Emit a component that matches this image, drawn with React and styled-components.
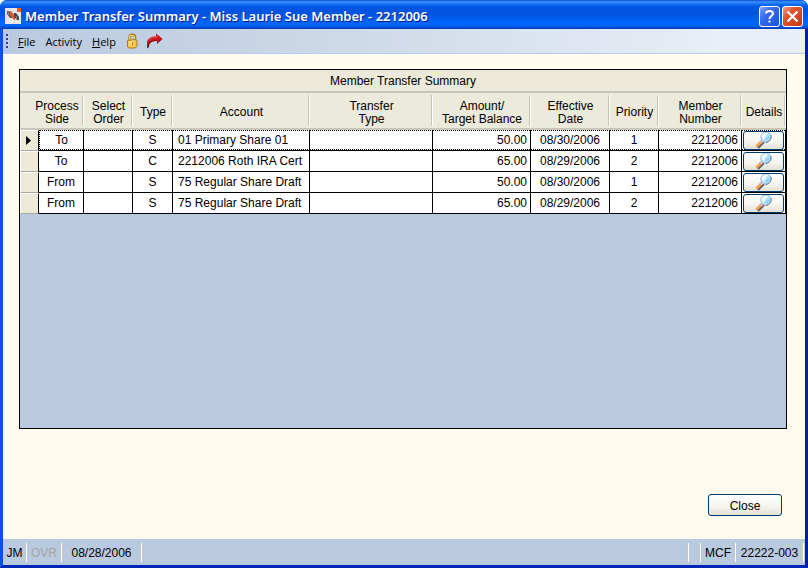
import React from "react";
import styled, { createGlobalStyle, css } from "styled-components";

const GlobalStyle = createGlobalStyle`
  * { box-sizing: border-box; }
  body { margin: 0; background: #fff; }
  button { font: inherit; color: inherit; margin: 0; padding: 0; cursor: default; }
`;

const Window = styled.div`
  min-height: 100vh;
  display: flex;
  flex-direction: column;
  border: 3px solid #0a3fd8;
  border-top: 0;
  border-left-color: #0a50e8;
  border-right-color: #001fa8;
  border-bottom-color: #0026b8;
  border-radius: 7px 7px 0 0;
  background: #fffbee;
  font-family: "Liberation Sans", Arial, sans-serif;
  font-size: 12px;
  line-height: 13px;
  color: #000;
`;

const TitleBar = styled.header`
  height: 29px;
  margin: 0 -3px;
  padding: 3px 5px 0 5px;
  display: flex;
  align-items: center;
  gap: 4px;
  border-radius: 7px 7px 0 0;
  background: linear-gradient(
    #0a4fd0 0, #3a93ff 2px, #1571f5 4px, #0256e2 7px, #0153e0 14px,
    #0261f8 20px, #0267ff 25px, #0148cc 28px, #0138b0 29px
  );
`;

const Title = styled.h1`
  margin: 0;
  flex: 1;
  font: 600 13px/16px "Noto Sans", "Open Sans", sans-serif;
  color: #fff;
  text-shadow: 1px 1px 0 #0a1d8c;
  white-space: nowrap;
`;

const CaptionButton = styled.button`
  width: 21px;
  height: 21px;
  margin-right: ${(p) => (p.$close ? 0 : -2)}px;
  display: flex;
  align-items: center;
  justify-content: center;
  border: 1px solid #fff;
  border-radius: 3px;
  background: ${(p) =>
    p.$close
      ? "linear-gradient(135deg, #f0a088, #e0532f 35%, #c63a12)"
      : "linear-gradient(135deg, #7fa5f8, #3a6cec 35%, #1f50d8)"};
`;

const MenuBar = styled.nav`
  height: 25px;
  padding-left: 3px;
  display: flex;
  align-items: center;
  border-bottom: 1px solid #b9cdf0;
  background: linear-gradient(90deg, #b9c9df, #cfdae8 45%, #e9eef7 90%);
  font: 11px/14px "Open Sans", Tahoma, sans-serif;
`;

const Grip = styled.span`
  width: 3px;
  height: 14px;
  margin-right: 9px;
  background: repeating-linear-gradient(#27487c 0 2px, transparent 2px 4px);
  border-right: 1px solid #c6d4e7;
`;

const MenuItem = styled.button`
  border: 0;
  background: none;
  margin-right: 10px;
  padding-top: 1px;
`;

const ToolButton = styled.button`
  border: 0;
  background: none;
  display: flex;
  margin-right: 8px;
`;

const Content = styled.main`
  flex: 1;
  display: flex;
  flex-direction: column;
  padding: 15px 18px 23px 16px;
`;

const GridPanel = styled.section`
  flex: 1;
  border: 1px solid #000;
  background: #b9c9df;
`;

const Table = styled.table`
  width: 100%;
  table-layout: fixed;
  border-collapse: separate;
  border-spacing: 0;
`;

const Caption = styled.caption`
  height: 23px;
  padding-top: 5px;
  border-bottom: 2px solid #c9c6b7;
  background: #ece9d8;
  text-align: center;
`;

const HeadCell = styled.th`
  height: 37px;
  padding: 4px 0 0 ${(p) => (p.$wide ? 10 : 0)}px;
  font-weight: normal;
  vertical-align: middle;
  white-space: pre-line;
  border-bottom: 2px solid #cbc7b8;
  background:
    linear-gradient(#fff, #fff) right 2px / 1px 31px no-repeat,
    linear-gradient(#c7c5b2, #c7c5b2) right 1px top 2px / 1px 31px no-repeat,
    #ebeadb;
`;

const cellBase = css`
  height: 21px;
  border-right: 1px solid #000;
  border-bottom: 1px solid #000;
  white-space: nowrap;
`;

const dots = "repeating-linear-gradient(90deg, #000 0 1px, #fff 1px 2px)";

const Cell = styled.td`
  ${cellBase}
  padding: 0 ${(p) => (p.$align === "right" ? 3 : 0)}px 0 ${(p) => (p.$align === "left" ? 5 : 0)}px;
  text-align: ${(p) => p.$align || "center"};
  background: ${(p) =>
    p.$current
      ? `${dots} top / 100% 1px no-repeat, ${dots} bottom / 100% 1px no-repeat, #fff`
      : "#fff"};
  ${(p) => p.$first && p.$current && "border-left: 1px dotted #000;"}
`;

const RowHeader = styled.th`
  ${cellBase}
  padding: 0 0 0 5px;
  border-bottom-color: #aca899;
  border-top: 1px solid #fff;
  border-left: 1px solid #fff;
  background: #ece9d8;
  line-height: 0;
  text-align: left;
`;

const xpButton = css`
  border: 1px solid #003c74;
  border-radius: 3px;
  background: linear-gradient(#fff, #f4f3ee 60%, #e2dfd3);
`;

const DetailButton = styled.button`
  ${xpButton}
  display: flex;
  justify-content: center;
  width: 41px;
  height: 19px;
  margin: 0 auto;
`;

const CloseButton = styled.button`
  ${xpButton}
  align-self: flex-end;
  width: 74px;
  height: 22px;
  margin: 65px 5px 0 0;
  padding-top: 2px;
`;

const StatusBar = styled.footer`
  height: 26px;
  padding-right: 1px;
  display: flex;
  align-items: center;
  background: #b9c9df;
`;

const StatusItem = styled.span`
  width: ${(p) => p.$width}px;
  height: 19px;
  padding-top: 4px;
  text-align: center;
  white-space: nowrap;
  color: ${(p) => (p.$off ? "#a3a79f" : "#000")};
  border-right: 1px solid #fff;
  box-shadow: inset -1px 0 #c8c6b8;
`;

const StatusGap = styled(StatusItem)`
  flex: 1;
`;

const AppIcon = () => (
  <svg width="16" height="16" viewBox="0 0 16 16" aria-hidden="true">
    <rect width="16" height="16" fill="#e9e7e4" />
    <rect x="12" width="4" height="4" fill="#f05a1e" />
    <path d="M2 3h2l3 3v4H5L2 6z" fill="#55555f" />
    <path d="M5 3h1l4 5v4H9L5 7z" fill="#e8552a" />
    <path d="M9 5h2l3 4v3h-2L9 9z" fill="#44444e" />
    <path d="M3 4l1 3M11 8l1 3" stroke="#8c8c95" />
  </svg>
);

const LockIcon = () => (
  <svg width="12" height="16" viewBox="0 0 12 16" aria-hidden="true">
    <path d="M3.500 8V4.500C3.500 1 9 1 9 4.500V8" fill="none" stroke="#a8781a" strokeWidth="2.600" />
    <path d="M3.500 8V4.500C3.500 1.500 8.500 1.500 8.500 4.500V8" fill="none" stroke="#f5d568" strokeWidth="1.200" />
    <path d="M1.500 7.500L9 6.500l2 1v6L9 15H3l-1.500-1z" fill="#f2c850" stroke="#b07c16" />
    <path d="M3 9h5M3 11h4" stroke="#fff0a0" />
    <path d="M6.500 9v3" stroke="#b88520" />
  </svg>
);

const ArrowIcon = () => (
  <svg width="17" height="16" viewBox="0 0 17 16" aria-hidden="true">
    <path d="M1 15.500V10C2 6 5 4 10 4V1l6.500 5L11 11V8C6 8 3 10 3 14z" fill="#7c1014" />
    <path d="M1 14V9C2 5.500 5 3.500 10 3.500V.5l6 5-5 4V7C6 7 3 8.500 2 12z" fill="#d01018" />
    <path d="M3 7.500C5 5 8 4.500 11 4.500V2.500" fill="none" stroke="#e84a48" />
  </svg>
);

const MagnifierIcon = () => (
  <svg width="17" height="17" viewBox="0 0 17 17" aria-hidden="true">
    <path d="M2.500 15.500l6-6" stroke="#60606c" strokeWidth="3.500" />
    <path d="M1.500 14.500l6-6" stroke="#f4a04a" strokeWidth="2.800" />
    <path d="M5.500 10.500l2-2" stroke="#d8b8c8" strokeWidth="3" />
    <circle cx="11" cy="5" r="5.200" fill="#b4e2fa" stroke="#a8bcd2" />
    <path d="M6.500 4C7 1.500 10 0 13 1L8 8z" fill="#f2fcff" />
    <path d="M15.800 3c1 3-1 7-5 7.500" fill="none" stroke="#627c98" />
    <path d="M11 8l3-3" stroke="#8fcdf0" strokeWidth="2" />
  </svg>
);

const columns = [
  { label: "Process\nSide", width: 45 },
  { label: "Select\nOrder", width: 49 },
  { label: "Type", width: 40 },
  { label: "Account", width: 137, align: "left" },
  { label: "Transfer\nType" },
  { label: "Amount/\nTarget Balance", width: 98, align: "right" },
  { label: "Effective\nDate", width: 79 },
  { label: "Priority", width: 49 },
  { label: "Member\nNumber", width: 83, align: "right" },
  { label: "Details", width: 44 },
];

const rows = [
  ["To", "", "S", "01 Primary Share 01", "", "50.00", "08/30/2006", "1", "2212006"],
  ["To", "", "C", "2212006 Roth IRA Cert", "", "65.00", "08/29/2006", "2", "2212006"],
  ["From", "", "S", "75 Regular Share Draft", "", "50.00", "08/30/2006", "1", "2212006"],
  ["From", "", "S", "75 Regular Share Draft", "", "65.00", "08/29/2006", "2", "2212006"],
];

const Col = styled.col`
  width: ${(p) => (p.$width ? `${p.$width}px` : "auto")};
`;

export default function App() {
  return (
    <Window>
      <GlobalStyle />
      <TitleBar>
        <AppIcon />
        <Title>Member Transfer Summary - Miss Laurie Sue Member - 2212006</Title>
        <CaptionButton aria-label="Help">
          <svg width="13" height="15" viewBox="0 0 13 15" aria-hidden="true">
            <path d="M3 4.500C3 1 10 1 10 4.500C10 7 6.500 7 6.500 10M6.500 11.500v2" fill="none" stroke="#fff" strokeWidth="2" />
          </svg>
        </CaptionButton>
        <CaptionButton $close aria-label="Close window">
          <svg width="13" height="13" viewBox="0 0 13 13" aria-hidden="true">
            <path d="M1.500 1.500l10 10M11.500 1.500l-10 10" stroke="#fff" strokeWidth="2.200" />
          </svg>
        </CaptionButton>
      </TitleBar>
      <MenuBar>
        <Grip />
        <MenuItem><u>F</u>ile</MenuItem>
        <MenuItem>Activity</MenuItem>
        <MenuItem><u>H</u>elp</MenuItem>
        <ToolButton aria-label="Lock"><LockIcon /></ToolButton>
        <ToolButton aria-label="Forward"><ArrowIcon /></ToolButton>
      </MenuBar>
      <Content>
        <GridPanel>
          <Table>
            <Caption>Member Transfer Summary</Caption>
            <colgroup>
              <Col $width={19} />
              {columns.map((c) => <Col key={c.label} $width={c.width} />)}
            </colgroup>
            <thead>
              <tr>
                {columns.map((c, i) => (
                  <HeadCell key={c.label} scope="col" colSpan={i === 0 ? 2 : 1} $wide={i === 0}>
                    {c.label}
                  </HeadCell>
                ))}
              </tr>
            </thead>
            <tbody>
              {rows.map((row, r) => (
                <tr key={r}>
                  <RowHeader scope="row" aria-label={`Row ${r + 1}`}>
                    {r === 0 && (
                      <svg width="5" height="9" viewBox="0 0 5 9" aria-hidden="true">
                        <path d="M0 0l5 4.500L0 9z" />
                      </svg>
                    )}
                  </RowHeader>
                  {row.map((value, c) => (
                    <Cell key={c} $align={columns[c].align} $current={r === 0} $first={c === 0}>
                      {value}
                    </Cell>
                  ))}
                  <Cell $current={r === 0}>
                    <DetailButton aria-label={`Details of row ${r + 1}`}><MagnifierIcon /></DetailButton>
                  </Cell>
                </tr>
              ))}
            </tbody>
          </Table>
        </GridPanel>
        <CloseButton>Close</CloseButton>
      </Content>
      <StatusBar>
        <StatusItem $width={24}>JM</StatusItem>
        <StatusItem $width={35} $off>OVR</StatusItem>
        <StatusItem $width={80}>08/28/2006</StatusItem>
        <StatusGap />
        <StatusItem $width={12} />
        <StatusItem $width={35}>MCF</StatusItem>
        <StatusItem $width={68}>22222-003</StatusItem>
      </StatusBar>
    </Window>
  );
}
